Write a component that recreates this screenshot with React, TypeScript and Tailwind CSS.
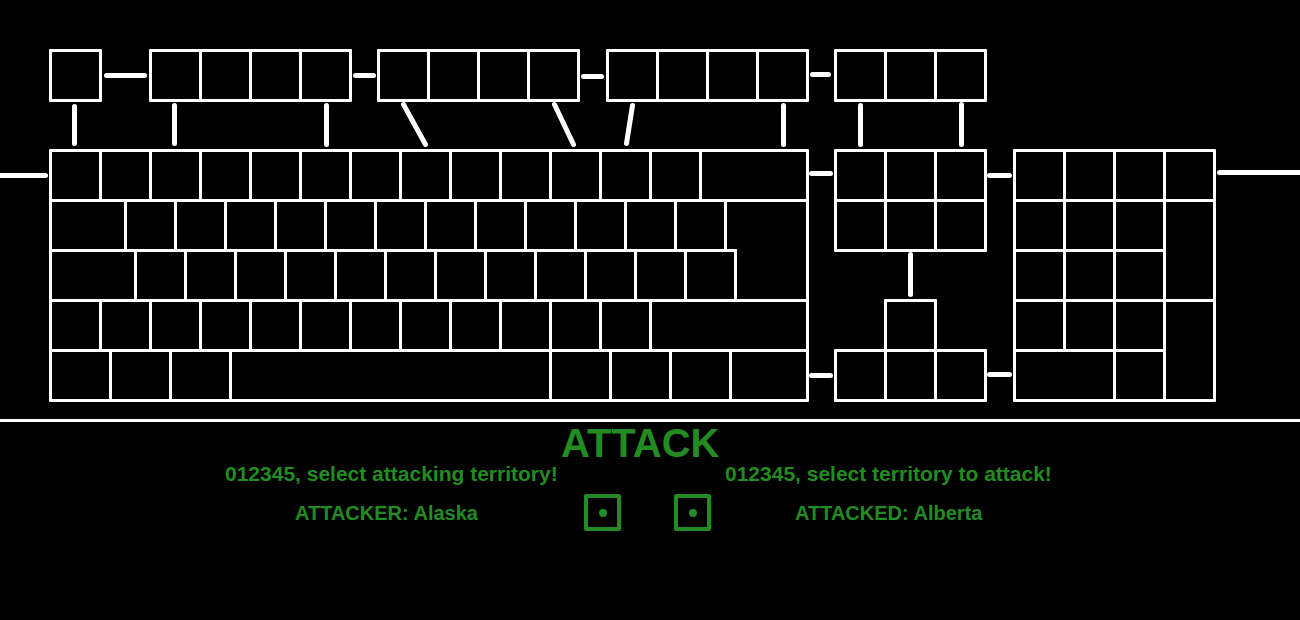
type KeyWidth = "key" | "wide72" | "wide82" | "mod" | "space" | "fill" | "enter";

const keyClass: Record<KeyWidth, string> = {
  key: "w-[47px] bg-black",
  wide72: "w-[72px] bg-black",
  wide82: "w-[82px] bg-black",
  mod: "w-[57px] bg-black",
  space: "w-[317px] bg-black",
  fill: "flex-1 bg-black",
  // lower half of the L-shaped key: covers the line above it
  enter: "-mt-[3px] flex-1 bg-black",
};

const repeat = (n: number): KeyWidth[] => Array<KeyWidth>(n).fill("key");

const mainRows: KeyWidth[][] = [
  [...repeat(13), "fill"],
  ["wide72", ...repeat(12), "fill"],
  ["wide82", ...repeat(12), "enter"],
  [...repeat(12), "fill"],
  ["mod", "mod", "mod", "space", "mod", "mod", "mod", "fill"],
];

function Keys({ rows, className = "" }: { rows: KeyWidth[][]; className?: string }) {
  return (
    <div className={`flex shrink-0 flex-col gap-[3px] rounded-[1px] bg-white p-[3px] ${className}`}>
      {rows.map((row, r) => (
        <div key={r} className="flex h-[47px] gap-[3px]">
          {row.map((kind, k) => (
            <div key={k} className={keyClass[kind]} />
          ))}
        </div>
      ))}
    </div>
  );
}

const numpadCells = [
  "", "", "", "",
  "", "", "", "row-span-2",
  "", "", "",
  "", "", "", "row-span-2",
  "col-span-2", "",
];

function Numpad() {
  return (
    <div className="ml-[26px] grid shrink-0 grid-cols-[repeat(4,47px)] grid-rows-[repeat(5,47px)] gap-[3px] rounded-[1px] bg-white p-[3px]">
      {numpadCells.map((span, i) => (
        <div key={i} className={`bg-black ${span}`} />
      ))}
    </div>
  );
}

// Links between neighbouring territories: x1, y1, x2, y2
const links = [
  [106.5, 75.5, 144.5, 75.5],
  [355.5, 75.5, 373.5, 75.5],
  [583.5, 76.5, 601.5, 76.5],
  [812.5, 74.5, 828.5, 74.5],
  [-5, 175.5, 45.5, 175.5],
  [811.5, 173.5, 830.5, 173.5],
  [989.5, 175.5, 1009.5, 175.5],
  [1219.5, 172.5, 4000, 172.5],
  [811.5, 375.5, 830.5, 375.5],
  [989.5, 374.5, 1009.5, 374.5],
  [74.5, 106.5, 74.5, 143.5],
  [174.5, 105.5, 174.5, 143.5],
  [326.5, 105.5, 326.5, 144.5],
  [403.5, 104.5, 425.5, 144.5],
  [554.5, 104.5, 573.5, 144.5],
  [632.5, 105.5, 626.5, 143.5],
  [783.5, 105.5, 783.5, 144.5],
  [860.5, 105.5, 860.5, 144.5],
  [961.5, 104.5, 961.5, 144.5],
  [910.5, 254.5, 910.5, 294.5],
];

function Links() {
  return (
    <svg className="pointer-events-none absolute inset-0 h-full w-full" aria-hidden="true">
      <g stroke="white" strokeWidth="5" strokeLinecap="round">
        {links.map(([x1, y1, x2, y2], i) => (
          <line key={i} x1={x1} y1={y1} x2={x2} y2={y2} />
        ))}
      </g>
    </svg>
  );
}

function Die() {
  return (
    <div className="flex size-[37px] shrink-0 items-center justify-center rounded-[2px] border-4 border-[#228b22]">
      <div className="size-2 rounded-full bg-[#228b22]" />
    </div>
  );
}

export default function App() {
  return (
    <main className="min-h-screen overflow-hidden bg-black font-['Liberation_Sans',Arial,sans-serif] font-bold text-[#228b22]">
      <section className="relative border-b-[3px] border-white pt-[49px] pb-[17px] pl-[49px]">
        <div className="flex">
          <Keys rows={[repeat(1)]} />
          <Keys rows={[repeat(4)]} className="ml-[47px]" />
          <Keys rows={[repeat(4)]} className="ml-[25px]" />
          <Keys rows={[repeat(4)]} className="ml-[26px]" />
          <Keys rows={[repeat(3)]} className="ml-[25px]" />
        </div>
        <div className="mt-[47px] flex">
          <Keys rows={mainRows} className="w-[760px]" />
          <div className="ml-[25px] flex shrink-0 flex-col items-center">
            <Keys rows={[repeat(3), repeat(3)]} />
            <Keys rows={[repeat(1)]} className="mt-[47px]" />
            <Keys rows={[repeat(3)]} className="-mt-[3px]" />
          </div>
          <Numpad />
        </div>
        <Links />
      </section>

      <section className="whitespace-nowrap">
        <h1 className="pt-0.5 pl-[561px] text-[40px] leading-[38px]">ATTACK</h1>
        <div className="flex pl-[225px] text-[21px] leading-6">
          <p className="w-[500px]">012345, select attacking territory!</p>
          <p>012345, select territory to attack!</p>
        </div>
        <div className="mt-2 flex items-center pl-[295px] text-[20px] leading-6">
          <p className="w-[289px]">ATTACKER: Alaska</p>
          <Die />
          <div className="ml-[53px]">
            <Die />
          </div>
          <p className="ml-[84px]">ATTACKED: Alberta</p>
        </div>
      </section>
    </main>
  );
}
